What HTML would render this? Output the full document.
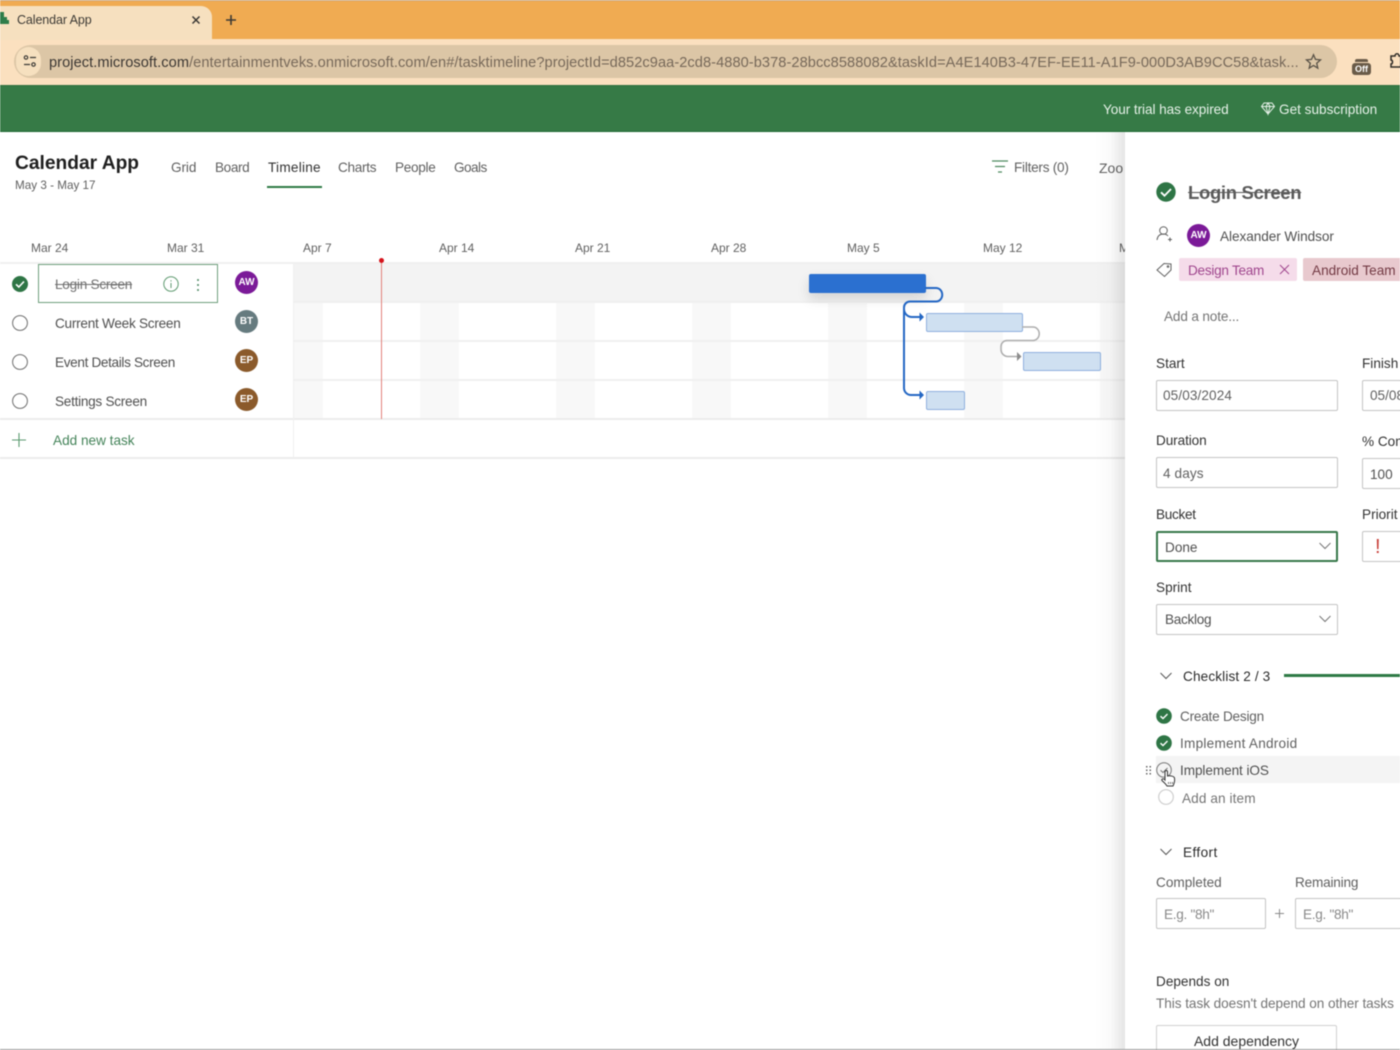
<!DOCTYPE html>
<html lang="en"><head><meta charset="utf-8"><title>Calendar App</title>
<style>
*{box-sizing:border-box}
html,body{margin:0;padding:0;width:1400px;height:1050px;overflow:hidden;background:#fff}
body{position:relative;font-family:"Liberation Sans",sans-serif;color:#505050;font-size:14px;filter:blur(.4px)}
.a{position:absolute}
.t{position:absolute;white-space:nowrap;line-height:20px;height:20px;font-size:13.6px}
.f{position:absolute;background:#fff;border:1.5px solid #c4c4c4;border-radius:2px}
.l{color:#333}
.hl{position:absolute;left:0;height:2px;background:#f0f0f0}
.wk{position:absolute;background:#f8f8f8;top:303px;height:116px}
.av{position:absolute;width:23px;height:23px;border-radius:50%;color:#fff;font-size:10px;font-weight:bold;text-align:center;line-height:24px}
.bar{position:absolute;height:19px;background:#cfe0f1;border:1.5px solid #8fb0de;border-radius:2px}
svg{position:absolute;overflow:visible}
</style></head><body>

<!-- browser chrome -->
<div class="a" style="left:0;top:0;width:1400px;height:39px;background:#f0ab52"></div>
<div class="a" style="left:0;top:0;width:1400px;height:1px;background:#c9a883"></div>
<div class="a" style="left:0;top:39px;width:1400px;height:46px;background:#fbe0bf"></div>
<div class="a" style="left:0;top:6px;width:212px;height:34px;background:#f6e0bf;border-radius:0 11px 0 0"></div>
<svg style="left:0;top:11px" width="10" height="15"><path d="M0 1h4v5h3v3h2v4H0z" fill="#2e7d4a"/></svg>
<div class="t" style="left:17px;top:10px;font-size:12.5px;color:#3d3a35;letter-spacing:-.1px">Calendar App</div>
<svg style="left:191px;top:15px" width="10" height="10"><path d="M1.500 1.500l7 7M8.500 1.500l-7 7" stroke="#3b3935" stroke-width="1.500"/></svg>
<svg style="left:225px;top:14px" width="12" height="12"><path d="M6 1v10M1 6h10" stroke="#3b3935" stroke-width="1.600"/></svg>
<div class="a" style="left:14px;top:45px;width:1323px;height:33px;border-radius:17px;background:#dcc6a6"></div>
<div class="a" style="left:16px;top:47px;width:25px;height:29px;border-radius:14px;background:#f6e0bf"></div>
<svg style="left:23px;top:55px" width="14" height="13" fill="none" stroke="#3b3935" stroke-width="1.200"><circle cx="3" cy="2.500" r="1.700"/><path d="M7 2.500h6M1 9.500h6"/><circle cx="10.500" cy="9.500" r="1.700"/></svg>
<div class="t" style="left:49px;top:53px;font-size:14.6px;line-height:21px;height:21px;color:#77695a;width:1250px;overflow:hidden;letter-spacing:.066px"><span style="color:#3b3733">project.microsoft.com</span>/entertainmentveks.onmicrosoft.com/en#/tasktimeline?projectId=d852c9aa-2cd8-4880-b378-28bcc8588082&amp;taskId=A4E140B3-47EF-EE11-A1F9-000D3AB9CC58&amp;task...</div>
<svg style="left:1305px;top:53px" width="17" height="17"><path d="M8.500 1.800l2 4.600 5 .5-3.800 3.300 1.100 4.900-4.300-2.600-4.300 2.600 1.100-4.900L1.500 6.900l5-.5z" fill="none" stroke="#5a5348" stroke-width="1.300"/></svg>
<div class="a" style="left:1352px;top:63px;width:19px;height:12px;border-radius:3px;background:#6a5b48;color:#fff;font-size:9px;font-weight:bold;line-height:12px;text-align:center">Off</div>
<div class="a" style="left:1355px;top:59px;width:13px;height:3px;border-radius:2px 2px 0 0;background:#6a5b48"></div>
<svg style="left:1389px;top:52px" width="11" height="18"><path d="M2 4h4c0-3 4-3 4 0h2v11H2v-3c2 0 2-4 0-4z" fill="none" stroke="#302c28" stroke-width="1.500"/></svg>

<!-- green header -->
<div class="a" style="left:0;top:85px;width:1400px;height:47px;background:#367a46;border-bottom:1px solid #1f6a33;border-top:1px solid #2f6f3e"></div>
<div class="t" style="left:1103px;top:100px;color:#e6f1e8;letter-spacing:-.07px">Your trial has expired</div>
<svg style="left:1261px;top:102px" width="14" height="13" fill="none" stroke="#e6f1e8" stroke-width="1"><path d="M3 1h8l2.500 3.500L7 12 .5 4.500zM.5 4.500h13M5 4.500L7 12l2-7.500M5 4.500L7 1l2 3.500"/></svg>
<div class="t" style="left:1279px;top:100px;color:#e6f1e8">Get subscription</div>

<!-- project header -->
<div class="t" style="left:15px;top:154px;font-size:19.2px;font-weight:bold;color:#1f1f1f">Calendar App</div>
<div class="t" style="left:15px;top:176px;font-size:11.7px;color:#616161">May 3 - May 17</div>
<div class="t" style="left:171px;top:158px;color:#616161;letter-spacing:-.1px">Grid</div>
<div class="t" style="left:215px;top:158px;color:#616161;letter-spacing:-.4px">Board</div>
<div class="t" style="left:268px;top:158px;color:#333;letter-spacing:.25px">Timeline</div>
<div class="a" style="left:267px;top:186px;width:55px;height:2px;background:#2f7a46"></div>
<div class="t" style="left:338px;top:158px;color:#616161;letter-spacing:-.3px">Charts</div>
<div class="t" style="left:395px;top:158px;color:#616161;letter-spacing:-.3px">People</div>
<div class="t" style="left:454px;top:158px;color:#616161;letter-spacing:-.55px">Goals</div>
<svg style="left:992px;top:160px" width="17" height="14"><path d="M0 1h16M3 6.500h10M6 12h4" stroke="#4e8a60" stroke-width="1.300"/></svg>
<div class="t" style="left:1014px;top:158px;color:#616161;letter-spacing:-.25px">Filters (0)</div>
<div class="t" style="left:1099px;top:158px;color:#616161;font-size:14px">Zoo</div>

<!-- date axis -->
<div class="t" style="left:31px;top:238px;font-size:12px;color:#616161">Mar 24</div>
<div class="t" style="left:167px;top:238px;font-size:12px;color:#616161">Mar 31</div>
<div class="t" style="left:303px;top:238px;font-size:12px;color:#616161">Apr 7</div>
<div class="t" style="left:439px;top:238px;font-size:12px;color:#616161">Apr 14</div>
<div class="t" style="left:575px;top:238px;font-size:12px;color:#616161">Apr 21</div>
<div class="t" style="left:711px;top:238px;font-size:12px;color:#616161">Apr 28</div>
<div class="t" style="left:847px;top:238px;font-size:12px;color:#616161">May 5</div>
<div class="t" style="left:983px;top:238px;font-size:12px;color:#616161">May 12</div>
<div class="t" style="left:1119px;top:238px;font-size:12px;color:#616161">M</div>

<!-- timeline grid -->
<div class="a" style="left:294px;top:264px;width:831px;height:38px;background:#f3f3f3"></div>
<div class="wk" style="left:294px;width:29px"></div>
<div class="wk" style="left:420px;width:39px"></div>
<div class="wk" style="left:556px;width:39px"></div>
<div class="wk" style="left:692px;width:39px"></div>
<div class="wk" style="left:828px;width:39px"></div>
<div class="wk" style="left:964px;width:39px"></div>
<div class="wk" style="left:1100px;width:25px"></div>
<div class="hl" style="top:262px;width:1125px"></div>
<div class="hl" style="top:301px;left:294px;width:831px"></div>
<div class="hl" style="top:340px;left:294px;width:831px"></div>
<div class="hl" style="top:379px;left:294px;width:831px"></div>
<div class="hl" style="top:418px;width:1125px;background:#ececec"></div>
<div class="hl" style="top:457px;width:1125px;background:#ececec"></div>
<div class="a" style="left:293px;top:264px;width:1px;height:194px;background:#f0f0f0"></div>
<div class="a" style="left:381px;top:262px;width:1.2px;height:157px;background:#e2807a"></div>
<div class="a" style="left:379px;top:258px;width:5px;height:5px;border-radius:50%;background:#d5131b"></div>

<!-- task rows -->
<svg style="left:12px;top:276px" width="16" height="16"><circle cx="8" cy="8" r="8" fill="#2e7545"/><path d="M4 8.300l2.800 2.700L12 5.500" fill="none" stroke="#fff" stroke-width="1.600"/></svg>
<div class="a" style="left:38px;top:264px;width:180px;height:39px;border:1px solid #6f9f7c;background:#fff"></div>
<div class="t" style="left:55px;top:275px;color:#707070;text-decoration:line-through;letter-spacing:-.25px">Login Screen</div>
<svg style="left:163px;top:276px" width="16" height="16" fill="none" stroke="#5f9a70"><circle cx="8" cy="8" r="7.200"/><path d="M8 7v5M8 4.300v1.200"/></svg>
<svg style="left:196px;top:278px" width="4" height="14" fill="#4f8a62"><circle cx="2" cy="2" r="1"/><circle cx="2" cy="7" r="1"/><circle cx="2" cy="12" r="1"/></svg>
<div class="av" style="left:235px;top:271px;background:#7b1a98">AW</div>
<svg style="left:12px;top:315px" width="16" height="16"><circle cx="8" cy="8" r="7.400" fill="none" stroke="#6e6e6e" stroke-width="1"/></svg>
<div class="t" style="left:55px;top:314px;letter-spacing:-.26px">Current Week Screen</div>
<div class="av" style="left:235px;top:310px;background:#667b7f">BT</div>
<svg style="left:12px;top:354px" width="16" height="16"><circle cx="8" cy="8" r="7.400" fill="none" stroke="#6e6e6e" stroke-width="1"/></svg>
<div class="t" style="left:55px;top:353px;letter-spacing:-.35px">Event Details Screen</div>
<div class="av" style="left:235px;top:349px;background:#8b5a2b">EP</div>
<svg style="left:12px;top:393px" width="16" height="16"><circle cx="8" cy="8" r="7.400" fill="none" stroke="#6e6e6e" stroke-width="1"/></svg>
<div class="t" style="left:55px;top:392px;letter-spacing:-.27px">Settings Screen</div>
<div class="av" style="left:235px;top:388px;background:#8b5a2b">EP</div>
<svg style="left:12px;top:433px" width="14" height="14"><path d="M7 0v14M0 7h14" stroke="#5c9a70" stroke-width="1.100"/></svg>
<div class="t" style="left:53px;top:431px;color:#45845a">Add new task</div>

<!-- gantt -->
<div class="a" style="left:809px;top:274px;width:117px;height:19px;background:#2b70d0;border-radius:2px;box-shadow:0 6px 12px rgba(0,0,0,.13)"></div>
<div class="bar" style="left:926px;top:313px;width:97px"></div>
<div class="bar" style="left:1023px;top:352px;width:78px"></div>
<div class="bar" style="left:926px;top:391px;width:39px"></div>
<svg style="left:0;top:0" width="1400" height="1050" fill="none">
<path d="M925 288h11a6 6.500 0 0 1 0 13.500h-26a6 6 0 0 0-6 6V388a7 7 0 0 0 7 7h10M904 309a8 8 0 0 0 8 8h9" stroke="#2467c4" stroke-width="2"/>
<path d="M919.500 312.500l4.500 4.500-4.500 4.500zM919.500 390.500l4.500 4.500-4.500 4.500z" fill="#2467c4"/>
<path d="M1022 327h11a6 6.500 0 0 1 0 13.500h-26a6 6 0 0 0-6 6v3a7 7 0 0 0 7 7h10" stroke="#adadad" stroke-width="1.500"/>
<path d="M1017 352l4.500 4.500-4.500 4.500z" fill="#8c8c8c"/>
</svg>

<!-- detail panel -->
<div class="a" style="left:1095px;top:132px;width:30px;height:917px;background:linear-gradient(to right,rgba(0,0,0,0),rgba(0,0,0,.02) 50%,rgba(0,0,0,.1))"></div>
<div class="a" style="left:1125px;top:132px;width:275px;height:918px;background:#fff"></div>
<svg style="left:1156px;top:182px" width="20" height="20"><circle cx="10" cy="10" r="9.700" fill="#2e7545"/><path d="M5 10.300l3.500 3.400L15 7" fill="none" stroke="#fff" stroke-width="1.800"/></svg>
<div class="t" style="left:1188px;top:183px;font-size:18.5px;font-weight:bold;color:#5a5a5a;text-decoration:line-through;letter-spacing:-.33px">Login Screen</div>
<svg style="left:1156px;top:226px" width="17" height="17" fill="none" stroke="#616161" stroke-width="1"><circle cx="7.500" cy="4.500" r="3.800"/><path d="M1 14c.5-4 2.500-6 6.500-6 2 0 3.500.7 4.500 2M12 13.500h4M14 11.500v4"/></svg>
<div class="av" style="left:1187px;top:224px;background:#7b1a98">AW</div>
<div class="t" style="left:1220px;top:227px;letter-spacing:-.06px">Alexander Windsor</div>
<svg style="left:1156px;top:262px" width="16" height="15" fill="none" stroke="#616161" stroke-width="1"><path d="M1 8l7-6.500 7 .5v6l-6.500 6.500z"/><circle cx="12" cy="4.500" r=".8"/></svg>
<div class="a" style="left:1179px;top:258px;width:118px;height:23px;background:#f5dcea;border-radius:2px"></div>
<div class="t" style="left:1188px;top:261px;color:#a0478e;letter-spacing:-.27px">Design Team</div>
<svg style="left:1280px;top:265px" width="9" height="9"><path d="M0 0l9 9M9 0l-9 9" stroke="#a0478e" stroke-width="1"/></svg>
<div class="a" style="left:1303px;top:258px;width:97px;height:23px;background:#e8c9ce;border-radius:2px 0 0 2px"></div>
<div class="t" style="left:1312px;top:261px;color:#733a44">Android Team</div>
<div class="t" style="left:1164px;top:307px;color:#757575;letter-spacing:-.15px">Add a note...</div>

<div class="t l" style="left:1156px;top:354px">Start</div>
<div class="f" style="left:1156px;top:380px;width:182px;height:31px"></div>
<div class="t" style="left:1163px;top:386px;color:#616161;letter-spacing:.1px">05/03/2024</div>
<div class="t l" style="left:1362px;top:354px">Finish</div>
<div class="f" style="left:1362px;top:380px;width:60px;height:31px"></div>
<div class="t" style="left:1370px;top:386px;color:#616161">05/08</div>

<div class="t l" style="left:1156px;top:431px;letter-spacing:-.1px">Duration</div>
<div class="f" style="left:1156px;top:457px;width:182px;height:31px"></div>
<div class="t" style="left:1163px;top:464px;color:#616161;letter-spacing:.1px">4 days</div>
<div class="t l" style="left:1362px;top:432px">% Con</div>
<div class="f" style="left:1362px;top:458px;width:60px;height:31px"></div>
<div class="t" style="left:1370px;top:465px">100</div>

<div class="t l" style="left:1156px;top:505px;letter-spacing:-.3px">Bucket</div>
<div class="f" style="left:1156px;top:531px;width:182px;height:31px;border:2px solid #37784a"></div>
<div class="t" style="left:1165px;top:538px">Done</div>
<svg style="left:1319px;top:542px" width="12" height="8"><path d="M.5 1l5.500 5.500L11.500 1" fill="none" stroke="#767676"/></svg>
<div class="t l" style="left:1362px;top:505px">Priorit</div>
<div class="f" style="left:1362px;top:531px;width:60px;height:31px"></div>
<div class="t" style="left:1375px;top:537px;font-size:20px;color:#c8403a">!</div>

<div class="t l" style="left:1156px;top:578px">Sprint</div>
<div class="f" style="left:1156px;top:604px;width:182px;height:31px"></div>
<div class="t" style="left:1165px;top:610px;letter-spacing:-.3px">Backlog</div>
<svg style="left:1319px;top:615px" width="12" height="8"><path d="M.5 1l5.500 5.500L11.500 1" fill="none" stroke="#767676"/></svg>

<svg style="left:1160px;top:672px" width="12" height="8"><path d="M.5 1l5.500 5.500L11.500 1" fill="none" stroke="#555"/></svg>
<div class="t" style="left:1183px;top:667px;color:#2b2b2b;letter-spacing:.13px">Checklist 2 / 3</div>
<div class="a" style="left:1284px;top:674px;width:116px;height:3px;background:#2f7a46"></div>

<div class="a" style="left:1156px;top:756px;width:244px;height:27px;background:#f4f4f4"></div>
<svg style="left:1156px;top:708px" width="16" height="16"><circle cx="8" cy="8" r="7.800" fill="#2e7545"/><path d="M4.500 8.200l2.500 2.300 4.500-4.500" fill="none" stroke="#fff" stroke-width="1.400"/></svg>
<div class="t" style="left:1180px;top:707px;color:#616161;letter-spacing:-.23px">Create Design</div>
<svg style="left:1156px;top:735px" width="16" height="16"><circle cx="8" cy="8" r="7.800" fill="#2e7545"/><path d="M4.500 8.200l2.500 2.300 4.500-4.500" fill="none" stroke="#fff" stroke-width="1.400"/></svg>
<div class="t" style="left:1180px;top:734px;color:#616161;letter-spacing:.24px">Implement Android</div>
<svg style="left:1146px;top:766px" width="6" height="9" fill="#666"><rect x="0" y="0" width="1.500" height="1.500"/><rect x="3.500" y="0" width="1.500" height="1.500"/><rect x="0" y="3.500" width="1.500" height="1.500"/><rect x="3.500" y="3.500" width="1.500" height="1.500"/><rect x="0" y="7" width="1.500" height="1.500"/><rect x="3.500" y="7" width="1.500" height="1.500"/></svg>
<svg style="left:1156px;top:762px" width="16" height="16" fill="none"><circle cx="8" cy="8" r="7.300" stroke="#777" stroke-width="1"/><path d="M4.500 8.200l2.500 2.300 4.500-4.500" stroke="#777" stroke-width="1"/></svg>
<div class="t" style="left:1180px;top:761px;letter-spacing:-.08px">Implement iOS</div>
<svg style="left:1161px;top:769px" width="15" height="19"><path d="M4 11V3c0-2 2.500-2 2.500 0v4c2-.5 6.500 0 7 2 .5 3 0 5-1.500 8H6c-1-2-3-3.500-5-5.500-1-1.500 1.500-2.500 3-.5z" fill="#fff" stroke="#333" stroke-width="1"/><path d="M7.500 13v2M9.500 13v2M11.500 13v2" stroke="#555" stroke-width=".8"/></svg>
<svg style="left:1158px;top:789px" width="16" height="16"><circle cx="8" cy="8" r="7.300" fill="none" stroke="#cfcfcf" stroke-width="1.200"/></svg>
<div class="t" style="left:1182px;top:789px;color:#757575;letter-spacing:.1px">Add an item</div>

<svg style="left:1160px;top:848px" width="12" height="8"><path d="M.5 1l5.500 5.500L11.500 1" fill="none" stroke="#555"/></svg>
<div class="t" style="left:1183px;top:843px;color:#2b2b2b;letter-spacing:.4px">Effort</div>
<div class="t" style="left:1156px;top:873px;color:#616161">Completed</div>
<div class="t" style="left:1295px;top:873px;color:#616161;letter-spacing:-.2px">Remaining</div>
<div class="f" style="left:1156px;top:898px;width:110px;height:31px"></div>
<div class="t" style="left:1164px;top:905px;color:#8a8a8a;letter-spacing:-.3px">E.g. "8h"</div>
<svg style="left:1275px;top:909px" width="9" height="9"><path d="M4.500 0v9M0 4.500h9" stroke="#8a8a8a" stroke-width="1"/></svg>
<div class="f" style="left:1295px;top:898px;width:130px;height:31px"></div>
<div class="t" style="left:1303px;top:905px;color:#8a8a8a;letter-spacing:-.3px">E.g. "8h"</div>

<div class="t l" style="left:1156px;top:972px">Depends on</div>
<div class="t" style="left:1156px;top:994px;color:#757575;letter-spacing:-.05px">This task doesn't depend on other tasks</div>
<div class="a" style="left:1156px;top:1025px;width:181px;height:30px;border:1px solid #d0d0d0;border-radius:2px"></div>
<div class="t" style="left:1156px;top:1031px;width:181px;text-align:center;color:#333;font-size:14px">Add dependency</div>
<div class="a" style="left:0;top:1049px;width:1400px;height:1px;background:#9a9a9a"></div>
</body></html>
